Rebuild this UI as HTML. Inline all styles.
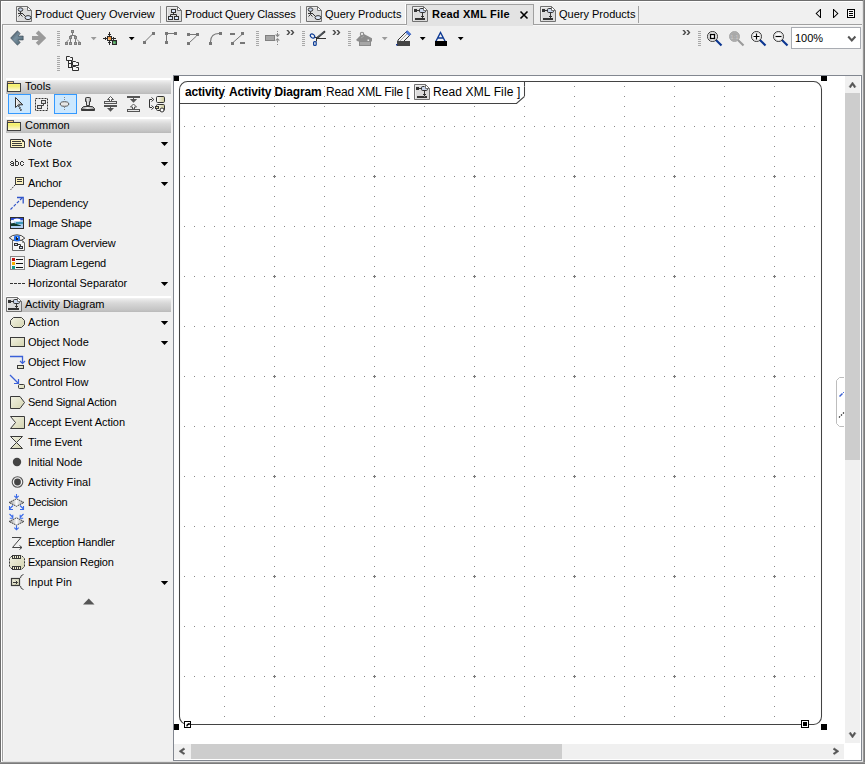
<!DOCTYPE html><html><head><meta charset='utf-8'><style>
*{margin:0;padding:0;box-sizing:border-box}
html,body{width:865px;height:764px;overflow:hidden;background:#f0f0f0;font-family:"Liberation Sans",sans-serif;font-size:11px;color:#000}
.a{position:absolute}
.t{position:absolute;white-space:nowrap;line-height:13px}
svg{position:absolute;overflow:visible}
</style></head><body><div class='a' style='left:0;top:0;width:865px;height:1px;background:#6d6d6d'></div><div class='a' style='left:0;top:0;width:1px;height:764px;background:#6d6d6d'></div><div class='a' style='left:1px;top:1px;width:862px;height:1px;background:#fff'></div><div class='a' style='left:1px;top:1px;width:1px;height:761px;background:#fff'></div><div class='a' style='left:863px;top:0;width:2px;height:764px;background:linear-gradient(90deg,#a5a5a5,#6d6d6d)'></div><div class='a' style='left:0;top:762px;width:865px;height:2px;background:linear-gradient(180deg,#a5a5a5,#6d6d6d)'></div><div class='a' style='left:862px;top:1px;width:1px;height:761px;background:#e3e3e3'></div><div class='a' style='left:2px;top:761px;width:861px;height:1px;background:#e3e3e3'></div><div class='a' style='left:2px;top:24px;width:404px;height:1px;background:#a0a0a0'></div><div class='a' style='left:534px;top:24px;width:328px;height:1px;background:#a0a0a0'></div><div class='a' style='left:2px;top:24px;width:1px;height:737px;background:#a0a0a0'></div><div class='a' style='left:3px;top:25px;width:1px;height:736px;background:#f8f8f8'></div><div class='a' style='left:3px;top:25px;width:859px;height:1px;background:#f8f8f8'></div><div class='a' style='left:405px;top:4px;width:1px;height:20px;background:#fff'></div><div class='a' style='left:406px;top:4px;width:128px;height:21px;border:1px solid #a0a0a0;border-bottom:none;background:#e3e3e3'></div><div class='a' style='left:407px;top:25px;width:126px;height:1px;background:#e3e3e3'></div><svg class='a' style='left:16px;top:6px' width='16' height='16' viewBox='0 0 16 16' ><path d='M0.5 0.5H11.5L15.5 4.5V15.5H0.5Z' fill='#dcdcdc' stroke='#727272'/><path d='M1.5 14.5V1.5H11' fill='none' stroke='#eeeeee'/><ellipse cx='4.5' cy='3.6' rx='2.3' ry='1.8' fill='#c9d6ec' stroke='#333' stroke-width='1'/><path d='M2 7.5H7M4.5 5.5V8.5M4.5 8.5L2.5 10.5M4.5 8.5L6.5 10.5M6.5 7.5L9.5 10.5' stroke='#333' fill='none'/><ellipse cx='12' cy='11.6' rx='3' ry='2' fill='#dde6f6' stroke='#333'/><path d='M11.5 0.5V4.5H15.5L11.5 0.5Z' fill='#fff' stroke='#727272' stroke-linejoin='round'/></svg><div class='t' style='left:35px;top:8px;letter-spacing:0px'>Product Query Overview</div><div class='a' style='left:160px;top:6px;width:1px;height:17px;background:#a0a0a0'></div><svg class='a' style='left:166px;top:6px' width='16' height='16' viewBox='0 0 16 16' ><path d='M0.5 0.5H11.5L15.5 4.5V15.5H0.5Z' fill='#dcdcdc' stroke='#727272'/><path d='M1.5 14.5V1.5H11' fill='none' stroke='#eeeeee'/><rect x='5.5' y='3.5' width='4' height='3' fill='#d9e6fb' stroke='#333'/><path d='M7.5 6.5V8.5M4.5 10V8.5H10.5V10' stroke='#333' fill='none'/><rect x='2.5' y='10.5' width='4' height='3' fill='#d9e6fb' stroke='#333'/><rect x='8.5' y='10.5' width='4' height='3' fill='#d9e6fb' stroke='#333'/><path d='M11.5 0.5V4.5H15.5L11.5 0.5Z' fill='#fff' stroke='#727272' stroke-linejoin='round'/></svg><div class='t' style='left:185px;top:8px;letter-spacing:-0.12px'>Product Query Classes</div><div class='a' style='left:300px;top:6px;width:1px;height:17px;background:#a0a0a0'></div><svg class='a' style='left:306px;top:6px' width='16' height='16' viewBox='0 0 16 16' ><path d='M0.5 0.5H11.5L15.5 4.5V15.5H0.5Z' fill='#dcdcdc' stroke='#727272'/><path d='M1.5 14.5V1.5H11' fill='none' stroke='#eeeeee'/><ellipse cx='4.5' cy='3.6' rx='2.3' ry='1.8' fill='#c9d6ec' stroke='#333' stroke-width='1'/><path d='M2 7.5H7M4.5 5.5V8.5M4.5 8.5L2.5 10.5M4.5 8.5L6.5 10.5M6.5 7.5L9.5 10.5' stroke='#333' fill='none'/><ellipse cx='12' cy='11.6' rx='3' ry='2' fill='#dde6f6' stroke='#333'/><path d='M11.5 0.5V4.5H15.5L11.5 0.5Z' fill='#fff' stroke='#727272' stroke-linejoin='round'/></svg><div class='t' style='left:325px;top:8px;letter-spacing:0px'>Query Products</div><svg class='a' style='left:412px;top:6px' width='16' height='16' viewBox='0 0 16 16' ><path d='M0.5 0.5H11.5L15.5 4.5V15.5H0.5Z' fill='#dcdcdc' stroke='#727272'/><path d='M1.5 14.5V1.5H11' fill='none' stroke='#eeeeee'/><rect x='2' y='3' width='3' height='3' fill='#333'/><path d='M5 4.5H7.5M10.5 7V12M9 10.5H12' stroke='#333' fill='none'/><rect x='7.5' y='2.5' width='6' height='4' rx='1.2' fill='#cbd8ee' stroke='#333'/><rect x='3' y='12' width='10' height='2' fill='#333'/><path d='M11.5 0.5V4.5H15.5L11.5 0.5Z' fill='#fff' stroke='#727272' stroke-linejoin='round'/></svg><div class='t' style='left:432px;top:8px;font-weight:bold;letter-spacing:0.22px'>Read XML File</div><svg class='a' style='left:520px;top:11px' width='9' height='8' viewBox='0 0 9 8' ><path d='M0.5 0.5L7.5 7.5M7.5 0.5L0.5 7.5' stroke='#000' stroke-width='1.6'/></svg><svg class='a' style='left:540px;top:6px' width='16' height='16' viewBox='0 0 16 16' ><path d='M0.5 0.5H11.5L15.5 4.5V15.5H0.5Z' fill='#dcdcdc' stroke='#727272'/><path d='M1.5 14.5V1.5H11' fill='none' stroke='#eeeeee'/><rect x='2' y='3' width='3' height='3' fill='#333'/><path d='M5 4.5H7.5M10.5 7V12M9 10.5H12' stroke='#333' fill='none'/><rect x='7.5' y='2.5' width='6' height='4' rx='1.2' fill='#cbd8ee' stroke='#333'/><rect x='3' y='12' width='10' height='2' fill='#333'/><path d='M11.5 0.5V4.5H15.5L11.5 0.5Z' fill='#fff' stroke='#727272' stroke-linejoin='round'/></svg><div class='t' style='left:559px;top:8px;letter-spacing:0px'>Query Products</div><div class='a' style='left:638px;top:6px;width:1px;height:17px;background:#a0a0a0'></div><svg class='a' style='left:0px;top:0px' width='865' height='30' viewBox='0 0 865 30' ><g fill='#000'><rect x='820' y='9' width='1' height='9'/><rect x='833' y='9' width='1' height='9'/><path d='M820 9.2V10.6L816.9 13.5L820 16.4V17.8L815.5 13.5Z'/><path d='M834 9.2V10.6L837.1 13.5L834 16.4V17.8L838.5 13.5Z'/></g><rect x='847.5' y='9.5' width='7' height='8' fill='#fafafa' stroke='#000'/><path d='M849 11.5H853M849 13.5H853M849 15.5H853' stroke='#000'/></svg><svg class='a' style='left:0px;top:0px' width='50' height='50' viewBox='0 0 50 50' ><defs><linearGradient id='ga' x1='0' y1='0' x2='1' y2='1'><stop offset='0' stop-color='#34424c'/><stop offset='.45' stop-color='#7890a0'/><stop offset='1' stop-color='#48606a'/></linearGradient></defs><path d='M10.6 38L17.4 30.8L20.3 33.5L17.9 36H23.2V40H17.9L20.3 42.5L17.4 45.2Z' fill='url(#ga)' stroke='#2a3540' stroke-width='.5'/><path d='M46.2 38L38.6 30.4L35.8 33.2L38.6 36H32V40H38.6L35.8 42.8L38.6 45.6Z' fill='#9a9a9a'/></svg><svg class='a' style='left:57px;top:31px' width='3' height='16' viewBox='0 0 3 16' ><path d='M0 0.5H3M0 2.5H3M0 4.5H3M0 6.5H3M0 8.5H3M0 10.5H3M0 12.5H3M0 14.5H3' stroke='#a8a8a8'/></svg><svg class='a' style='left:0px;top:0px' width='100' height='50' viewBox='0 0 100 50' ><g fill='#a4a4a4' stroke='#7e7e7e'><rect x='71.5' y='30.5' width='2' height='2'/><rect x='69.5' y='36.5' width='2' height='2'/><rect x='74.5' y='36.5' width='2' height='2'/><rect x='65.5' y='42.5' width='2' height='2'/><rect x='69.5' y='42.5' width='2' height='2'/><rect x='74.5' y='42.5' width='2' height='2'/><rect x='78.5' y='42.5' width='2' height='2'/></g><path d='M72.5 33V35.5M70.5 36V35.5H75.5V36M70.5 39V42M75.5 39V42M69 39.5L66.5 42M77 39.5L79.5 42' stroke='#7e7e7e' fill='none'/></svg><svg class='a' style='left:91px;top:37px' width='6' height='4' viewBox='0 0 6 4' ><path d='M-0.2 0H5.6L2.7 3.3Z' fill='#9a9a9a'/></svg><svg class='a' style='left:0px;top:0px' width='200' height='50' viewBox='0 0 200 50' ><path d='M109.5 32V45M103 38.5H116M108 34.5H111M108 42.5H111M105.5 37V40M113.5 37V40' stroke='#2a2a2a' fill='none'/><defs><linearGradient id='go' x1='0' y1='1' x2='1' y2='0'><stop offset='0' stop-color='#fffbe8'/><stop offset='.5' stop-color='#f0a050'/><stop offset='1' stop-color='#e07818'/></linearGradient><linearGradient id='gg' x1='0' y1='1' x2='1' y2='0'><stop offset='0' stop-color='#fffbe8'/><stop offset='.5' stop-color='#60c070'/><stop offset='1' stop-color='#20a040'/></linearGradient></defs><rect x='107.5' y='36.5' width='4' height='4' fill='url(#go)' stroke='#2a2a2a'/><rect x='112.6' y='40.6' width='3.8' height='3.8' fill='url(#gg)' stroke='#2a2a2a' stroke-width='1.2'/></svg><svg class='a' style='left:129px;top:37px' width='6' height='4' viewBox='0 0 6 4' ><path d='M-0.2 0H5.6L2.7 3.3Z' fill='#000'/></svg><svg class='a' style='left:142px;top:31px' width='14' height='14' viewBox='0 0 14 14' ><rect x='1' y='10' width='3' height='3' fill='#777'/><rect x='10' y='1' width='3' height='3' fill='#777'/><path d='M3 10.5L10.5 3' stroke='#777'/></svg><svg class='a' style='left:0px;top:0px' width='250' height='50' viewBox='0 0 250 50' ><g fill='#777'><rect x='165' y='32' width='3' height='3'/><rect x='174' y='32' width='3' height='3'/><rect x='165' y='41' width='3' height='3'/><rect x='187' y='33' width='3' height='3'/><rect x='196' y='33' width='3' height='3'/><rect x='187' y='42' width='3' height='3'/></g><path d='M168 33.5H174M166.5 35V41M190 34.5H196M196.5 36L189.5 42.5' stroke='#777' fill='none'/></svg><svg class='a' style='left:208px;top:31px' width='15' height='15' viewBox='0 0 15 15' ><rect x='1' y='11' width='3' height='3' fill='#777'/><rect x='11' y='1' width='3' height='3' fill='#777'/><path d='M2.5 11C2.5 5 6 2.5 11 2.5' stroke='#777' fill='none' stroke-width='1.1'/></svg><svg class='a' style='left:229px;top:31px' width='16' height='15' viewBox='0 0 16 15' ><rect x='1' y='2' width='5' height='2' fill='#777'/><rect x='12' y='1' width='3' height='3' fill='#777'/><rect x='2' y='11' width='3' height='3' fill='#777'/><rect x='11' y='11' width='5' height='2' fill='#777'/><path d='M13 3.5L4 11.5' stroke='#777'/></svg><svg class='a' style='left:256px;top:31px' width='3' height='16' viewBox='0 0 3 16' ><path d='M0 0.5H3M0 2.5H3M0 4.5H3M0 6.5H3M0 8.5H3M0 10.5H3M0 12.5H3M0 14.5H3' stroke='#a8a8a8'/></svg><svg class='a' style='left:0px;top:0px' width='300' height='50' viewBox='0 0 300 50' ><rect x='265.5' y='35.5' width='9' height='5' fill='#a6a6a6' stroke='#808080'/><g fill='#888'><rect x='277' y='31' width='1' height='1'/><rect x='277' y='44' width='1' height='1'/><rect x='277' y='33' width='1' height='2'/><path d='M275 34.6H280L277.5 37.2Z'/><path d='M275 40.6H280L277.5 38Z'/><rect x='277' y='40.5' width='1' height='2'/></g></svg><svg class='a' style='left:286px;top:30px' width='9' height='6' viewBox='0 0 9 6' ><path d='M0.3 0H2.2L4.4 2.5L2.2 5H0.3L2.5 2.5ZM4.3 0H6.2L8.4 2.5L6.2 5H4.3L6.5 2.5Z' fill='#4a4a4a'/></svg><svg class='a' style='left:302px;top:31px' width='3' height='16' viewBox='0 0 3 16' ><path d='M0 0.5H3M0 2.5H3M0 4.5H3M0 6.5H3M0 8.5H3M0 10.5H3M0 12.5H3M0 14.5H3' stroke='#a8a8a8'/></svg><svg class='a' style='left:0px;top:0px' width='400' height='50' viewBox='0 0 400 50' ><path d='M316.5 38V41.5M314.5 37.5H317M316 38.5H326' stroke='#333' fill='none'/><path d='M316.8 38.2L325 31.2' stroke='#333' stroke-width='2'/><path d='M317.8 37.2L324 31.8' stroke='#a8c8e8' stroke-width='.7' stroke-dasharray='.8 .8'/><ellipse cx='312.5' cy='36' rx='2.4' ry='1.8' transform='rotate(40 312.5 36)' fill='none' stroke='#0c3c96' stroke-width='1.2'/><rect x='313.6' y='41.6' width='2.6' height='3.8' rx='1' fill='none' stroke='#0c3c96' stroke-width='1.2'/></svg><svg class='a' style='left:332px;top:30px' width='9' height='6' viewBox='0 0 9 6' ><path d='M0.3 0H2.2L4.4 2.5L2.2 5H0.3L2.5 2.5ZM4.3 0H6.2L8.4 2.5L6.2 5H4.3L6.5 2.5Z' fill='#4a4a4a'/></svg><svg class='a' style='left:348px;top:31px' width='3' height='16' viewBox='0 0 3 16' ><path d='M0 0.5H3M0 2.5H3M0 4.5H3M0 6.5H3M0 8.5H3M0 10.5H3M0 12.5H3M0 14.5H3' stroke='#a8a8a8'/></svg><svg class='a' style='left:0px;top:0px' width='400' height='50' viewBox='0 0 400 50' ><path d='M356 40L362.5 33.2L372 38.2V41.5H358Z' fill='#8c8c8c'/><circle cx='362' cy='34' r='1.7' fill='#e8e8e8' stroke='#8c8c8c' stroke-width='1.1'/><rect x='367.5' y='39.5' width='1.6' height='1.6' fill='#eee'/><path d='M361 38L364 36' stroke='#a4a4a4'/><rect x='359.5' y='41.5' width='11' height='4' fill='#a6a6a6' stroke='#8a8a8a'/></svg><svg class='a' style='left:382px;top:37px' width='6' height='4' viewBox='0 0 6 4' ><path d='M-0.2 0H5.6L2.7 3.3Z' fill='#9a9a9a'/></svg><svg class='a' style='left:0px;top:0px' width='450' height='50' viewBox='0 0 450 50' ><g transform='translate(-0.5 1)'><path d='M398.5 41V39L407 30.5L410.5 34L403.5 41' fill='#f2f2f2' stroke='#333' stroke-linejoin='round'/><path d='M400.5 40L408 32.5' stroke='#aaa'/><path d='M406.3 31.2L407.8 29.7L411.3 33.2L409.8 34.7Z' fill='#4a7ae0' stroke='#2a4fb0' stroke-width='.8'/></g><rect x='397' y='41' width='13' height='5' fill='#444'/><rect x='396' y='44' width='1.5' height='1.5' fill='#1a3a9a'/></svg><svg class='a' style='left:420px;top:37px' width='6' height='4' viewBox='0 0 6 4' ><path d='M-0.2 0H5.6L2.7 3.3Z' fill='#000'/></svg><svg class='a' style='left:434px;top:31px' width='14' height='16' viewBox='0 0 14 16' ><path d='M1.8 10.5L6.5 1.5L11.2 10.5M4 7H9' stroke='#0e3a94' stroke-width='1.4' fill='none'/><rect x='1' y='10' width='12' height='5' fill='#000'/></svg><svg class='a' style='left:458px;top:37px' width='6' height='4' viewBox='0 0 6 4' ><path d='M-0.2 0H5.6L2.7 3.3Z' fill='#000'/></svg><svg class='a' style='left:682px;top:30px' width='9' height='6' viewBox='0 0 9 6' ><path d='M0.3 0H2.2L4.4 2.5L2.2 5H0.3L2.5 2.5ZM4.3 0H6.2L8.4 2.5L6.2 5H4.3L6.5 2.5Z' fill='#4a4a4a'/></svg><svg class='a' style='left:698px;top:31px' width='3' height='16' viewBox='0 0 3 16' ><path d='M0 0.5H3M0 2.5H3M0 4.5H3M0 6.5H3M0 8.5H3M0 10.5H3M0 12.5H3M0 14.5H3' stroke='#a8a8a8'/></svg><svg class='a' style='left:0px;top:0px' width='865' height='60' viewBox='0 0 865 60' ><path d='M715.7 39.7L721.5 45.5' stroke='#0a3590' stroke-width='2.1'/><circle cx='712.5' cy='36.5' r='5' fill='#fff' stroke='#333' stroke-width='1'/><circle cx='712.5' cy='36.5' r='4' fill='none' stroke='#c4c4c4' stroke-width='.7'/><rect x='710.5' y='34.5' width='4' height='4' fill='none' stroke='#000' stroke-width='1.3'/></svg><svg class='a' style='left:0px;top:0px' width='865' height='60' viewBox='0 0 865 60' ><path d='M737.7 39.7L743.5 45.5' stroke='#9a9a9a' stroke-width='2.1'/><circle cx='734.5' cy='36.5' r='5' fill='#a8a8a8' stroke='#a8a8a8' stroke-width='1'/><circle cx='734.5' cy='36.5' r='4' fill='none' stroke='#b0b0b0' stroke-width='.7'/><text x='734.5' y='39' font-size='6' text-anchor='middle' fill='#c8c8c8' font-family='Liberation Sans'>1:1</text></svg><svg class='a' style='left:0px;top:0px' width='865' height='60' viewBox='0 0 865 60' ><path d='M759.7 39.7L765.5 45.5' stroke='#0a3590' stroke-width='2.1'/><circle cx='756.5' cy='36.5' r='5' fill='#fff' stroke='#333' stroke-width='1'/><circle cx='756.5' cy='36.5' r='4' fill='none' stroke='#c4c4c4' stroke-width='.7'/><path d='M753.5 36.5H759.5M756.5 33.5V39.5' stroke='#000' stroke-width='1.2'/></svg><svg class='a' style='left:0px;top:0px' width='865' height='60' viewBox='0 0 865 60' ><path d='M781.7 39.7L787.5 45.5' stroke='#0a3590' stroke-width='2.1'/><circle cx='778.5' cy='36.5' r='5' fill='#fff' stroke='#333' stroke-width='1'/><circle cx='778.5' cy='36.5' r='4' fill='none' stroke='#c4c4c4' stroke-width='.7'/><path d='M775.5 36.5H781.5' stroke='#000' stroke-width='1.2'/></svg><div class='a' style='left:791px;top:27px;width:70px;height:22px;border:1px solid #a9acb2;background:#fff'></div><div class='t' style='left:795px;top:32px;font-size:11px'>100%</div><svg class='a' style='left:847px;top:35px' width='10' height='8' viewBox='0 0 10 8' ><path d='M1.2 1.5L4.8 5.5L8.4 1.5' stroke='#555' stroke-width='2' fill='none'/></svg><svg class='a' style='left:57px;top:56px' width='3' height='16' viewBox='0 0 3 16' ><path d='M0 0.5H3M0 2.5H3M0 4.5H3M0 6.5H3M0 8.5H3M0 10.5H3M0 12.5H3M0 14.5H3' stroke='#a8a8a8'/></svg><svg class='a' style='left:0px;top:0px' width='100' height='80' viewBox='0 0 100 80' ><g fill='#f6f6f6' stroke='#2e2e2e'><rect x='68.5' y='60.5' width='3' height='7'/><path d='M68.5 63.5H71.5' fill='none'/><path d='M66.5 56.5H69.5L70.5 57.5H72.5V60.5H66.5Z'/><path d='M72.5 61.5H75.5L76.5 62.5H78.5V65.5H72.5Z'/><path d='M72.5 66.5H75.5L76.5 67.5H78.5V70.5H72.5Z'/></g></svg><svg width='0' height='0' style='position:absolute'><defs><linearGradient id='gf' x1='0' y1='0' x2='0' y2='1'><stop offset='0' stop-color='#fdfa78'/><stop offset='.3' stop-color='#f2ee70'/><stop offset='1' stop-color='#fffce8'/></linearGradient><linearGradient id='gc' x1='0' y1='0' x2='1' y2='1'><stop offset='0' stop-color='#f2f2e4'/><stop offset='1' stop-color='#d4d4b0'/></linearGradient><linearGradient id='gs' x1='0' y1='0' x2='0' y2='1'><stop offset='0' stop-color='#777'/><stop offset='.5' stop-color='#fff'/><stop offset='1' stop-color='#555'/></linearGradient></defs></svg><div class='a' style='left:6px;top:78px;width:165px;height:16px;background:linear-gradient(#fff 0,#fff 1.5px,#f2f2f2 2px,#e6e6e6 4px,#d8d8d8 7px,#c4c4c4 14px,#b9b9b9 16px)'></div><svg class='a' style='left:7px;top:81px' width='15' height='12' viewBox='0 0 15 12' ><rect x='0.5' y='0.5' width='6' height='2.2' fill='#f8c880' stroke='#5a5a5a'/><rect x='0.5' y='2.5' width='13' height='8' fill='url(#gf)' stroke='#404040'/></svg><div class='t' style='left:25px;top:80px'>Tools</div><div class='a' style='left:6px;top:117px;width:165px;height:16px;background:linear-gradient(#fff 0,#fff 1.5px,#f2f2f2 2px,#e6e6e6 4px,#d8d8d8 7px,#c4c4c4 14px,#b9b9b9 16px)'></div><svg class='a' style='left:7px;top:120px' width='15' height='12' viewBox='0 0 15 12' ><rect x='0.5' y='0.5' width='6' height='2.2' fill='#f8c880' stroke='#5a5a5a'/><rect x='0.5' y='2.5' width='13' height='8' fill='url(#gf)' stroke='#404040'/></svg><div class='t' style='left:25px;top:119px'>Common</div><div class='a' style='left:6px;top:296px;width:165px;height:16px;background:linear-gradient(#fff 0,#fff 1.5px,#f2f2f2 2px,#e6e6e6 4px,#d8d8d8 7px,#c4c4c4 14px,#b9b9b9 16px)'></div><svg class='a' style='left:6px;top:297px' width='16' height='15' viewBox='0 0 16 15' ><path d='M0.5 0.5H11.5L15.5 4.5V14.5H0.5Z' fill='#dcdcdc' stroke='#727272'/><path d='M1.5 13.5V1.5H11' fill='none' stroke='#eeeeee'/><rect x='2' y='3' width='3' height='3' fill='#333'/><path d='M5 4.5H7.5M10.5 7V11M9 9.5H12' stroke='#333' fill='none'/><rect x='7.5' y='2.5' width='6' height='4' rx='1.2' fill='#cbd8ee' stroke='#333'/><rect x='2' y='11' width='11' height='2' fill='#333'/><path d='M11.5 0.5V4.5H15.5L11.5 0.5Z' fill='#fff' stroke='#727272' stroke-linejoin='round'/></svg><div class='t' style='left:25px;top:298px'>Activity Diagram</div><div class='a' style='left:8px;top:94px;width:23px;height:20px;border:1px solid #3399ff;background:#cce8ff'></div><div class='a' style='left:54px;top:94px;width:23px;height:20px;border:1px solid #3399ff;background:#cce8ff'></div><svg class='a' style='left:0px;top:0px' width='100' height='120' viewBox='0 0 100 120' ><defs><linearGradient id='gar' x1='0' y1='0' x2='1' y2='0'><stop offset='0' stop-color='#fff'/><stop offset='1' stop-color='#999'/></linearGradient></defs><path d='M15.5 97.5V107.5L18.5 104.8H22.8Z' fill='url(#gar)' stroke='#333' stroke-linejoin='round'/><path d='M18.6 105.5L21.3 110.8' stroke='#333' stroke-width='1.8' stroke-dasharray='1.3 .9'/><rect x='35.5' y='98.5' width='12' height='12' fill='none' stroke='#333' stroke-dasharray='2 1'/><rect x='41.5' y='100.5' width='4' height='3' fill='#ddd' stroke='#444'/><rect x='37.5' y='105.5' width='4' height='3' fill='#ddd' stroke='#444'/><path d='M43.5 103.5V105.5H41.5' stroke='#444' fill='none'/><path d='M64.5 97V101M64.5 107V110' stroke='#888' stroke-dasharray='1 1'/><ellipse cx='64.5' cy='104' rx='4.3' ry='2.3' fill='#e6e6e6' stroke='#555'/></svg><svg class='a' style='left:0px;top:0px' width='200' height='120' viewBox='0 0 200 120' ><defs><linearGradient id='gst' x1='0' y1='0' x2='1' y2='0'><stop offset='0' stop-color='#777'/><stop offset='.45' stop-color='#eee'/><stop offset='1' stop-color='#888'/></linearGradient><linearGradient id='gcr' x1='0' y1='0' x2='1' y2='0'><stop offset='0' stop-color='#fff'/><stop offset='1' stop-color='#cfcb98'/></linearGradient></defs><path d='M85.5 101.5V98.5Q85.5 97.5 86.5 97.5H89.5Q90.5 97.5 90.5 98.5V101.5H89.5V105.5H86.5V101.5Z' fill='url(#gst)' stroke='#3a3a3a'/><path d='M81.5 110.5V108.5L83.5 106.5H92.5L94.5 108.5V110.5Z' fill='url(#gst)' stroke='#3a3a3a'/><rect x='82' y='109' width='12' height='2' fill='#3a3a3a'/><path d='M110.5 96.5L113.5 99.5H111.5V101.5H109.5V99.5H107.5Z' fill='#fafafa' stroke='#555' stroke-linejoin='miter'/><rect x='104.5' y='101.5' width='12' height='2' fill='#e8e8e8' stroke='#555'/><rect x='104' y='105' width='13' height='2' fill='#555'/><path d='M107 108H114L110.5 111.8Z' fill='#555'/><rect x='110' y='107' width='1' height='1' fill='#555'/><rect x='127' y='96' width='13' height='2' fill='#555'/><path d='M129.8 99H137.2L133.5 102.8Z' fill='#555'/><rect x='133' y='98' width='1' height='1' fill='#555'/><path d='M133.5 104L136.5 107H134.5V109H132.5V107H130.5Z' fill='#fafafa' stroke='#555'/><rect x='127.5' y='109.5' width='12' height='2' fill='#e8e8e8' stroke='#555'/><path d='M152 99.5H149.5V107.5H152' fill='none' stroke='#333'/><path d='M151.5 97.5L153.8 99.5L151.5 101.5M151.5 105.5L153.8 107.5L151.5 109.5' fill='none' stroke='#333'/><rect x='156.5' y='96.5' width='8' height='6' rx='1.2' fill='url(#gcr)' stroke='#333'/><rect x='156.5' y='104.5' width='8' height='6' rx='1.2' fill='url(#gcr)' stroke='#333'/><rect x='155.5' y='106.5' width='3' height='2' fill='#dcd8a0' stroke='#333'/><circle cx='162' cy='110' r='2' fill='#fff' stroke='#333'/></svg><svg class='a' style='left:10px;top:139px' width='16' height='10' viewBox='0 0 16 10' ><path d='M0.5 0.5H12.5L14.5 2.5V8.5H0.5Z' fill='#fdf3bf' stroke='#3a3a3a'/><path d='M2 2.5H11M2 4.5H12M2 6.5H12' stroke='#3a3a3a'/><path d='M12.5 0.5V2.5H14.5' stroke='#3a3a3a' fill='none'/></svg><div class='t' style='left:28px;top:137px;letter-spacing:0.333px'>Note</div><svg class='a' style='left:161px;top:142px' width='8' height='5' viewBox='0 0 8 5' ><path d='M-0.2 0H7.2L3.5 3.9Z' fill='#000'/></svg><svg class='a' style='left:0px;top:0px' width='30' height='170' viewBox='0 0 30 170' ><g fill='#383838'><rect x='11' y='161' width='2' height='1'/><rect x='10' y='162' width='1' height='1'/><rect x='13' y='162' width='1' height='4'/><rect x='11' y='163' width='2' height='1'/><rect x='10' y='164' width='1' height='1'/><rect x='11' y='165' width='2' height='1'/><rect x='15' y='159' width='1' height='7'/><rect x='16' y='161' width='2' height='1'/><rect x='18' y='162' width='1' height='3'/><rect x='16' y='165' width='2' height='1'/><rect x='21' y='161' width='2' height='1'/><rect x='20' y='162' width='1' height='3'/><rect x='23' y='162' width='1' height='1'/><rect x='23' y='164' width='1' height='1'/><rect x='21' y='165' width='2' height='1'/></g></svg><div class='t' style='left:28px;top:157px;letter-spacing:0.214px'>Text Box</div><svg class='a' style='left:161px;top:162px' width='8' height='5' viewBox='0 0 8 5' ><path d='M-0.2 0H7.2L3.5 3.9Z' fill='#000'/></svg><svg class='a' style='left:9px;top:176px' width='16' height='16' viewBox='0 0 16 16' ><rect x='6.5' y='1.5' width='8' height='7' fill='#fdf3bf' stroke='#3a3a3a'/><path d='M8 3.5H13M8 5.5H13' stroke='#3a3a3a'/><path d='M6 9L1 14.5' stroke='#3a3a3a' stroke-dasharray='1.5 1'/></svg><div class='t' style='left:28px;top:177px;letter-spacing:-0.200px'>Anchor</div><svg class='a' style='left:161px;top:182px' width='8' height='5' viewBox='0 0 8 5' ><path d='M-0.2 0H7.2L3.5 3.9Z' fill='#000'/></svg><svg class='a' style='left:9px;top:196px' width='16' height='16' viewBox='0 0 16 16' ><path d='M1.5 13.5L13 2' stroke='#3054c8' stroke-width='1.2' stroke-dasharray='3 1.5'/><path d='M8 1.5H14.2V7.5' stroke='#3054c8' stroke-width='1.3' fill='none'/></svg><div class='t' style='left:28px;top:197px;letter-spacing:-0.167px'>Dependency</div><svg class='a' style='left:0px;top:0px' width='30' height='240' viewBox='0 0 30 240' ><rect x='10.5' y='217.5' width='13' height='11' fill='#a8c8ec' stroke='#2e2e2e'/><rect x='11' y='218' width='12' height='2' fill='#2848d0'/><ellipse cx='17' cy='220' rx='3.5' ry='1.6' fill='#fff'/><ellipse cx='12.5' cy='221.5' rx='1.8' ry='1.5' fill='#f4f8ff'/><rect x='16' y='222' width='7' height='2' fill='#3c98b8'/><path d='M11 223.5L14 223L18 224.5L21 225.5V226H11Z' fill='#0e3a2c'/><rect x='11' y='226' width='12' height='2' fill='#b0d0f4'/></svg><div class='t' style='left:28px;top:217px;letter-spacing:-0.150px'>Image Shape</div><svg class='a' style='left:0px;top:0px' width='30' height='260' viewBox='0 0 30 260' ><path d='M12.5 240.5H22.5L24.5 242.5V250.5H12.5Z' fill='#f6f6f6' stroke='#666'/><path d='M22.5 240.5V242.5H24.5' fill='none' stroke='#888'/><rect x='14.5' y='243.5' width='3' height='2' fill='#c8d4f0' stroke='#333'/><rect x='19.5' y='246.5' width='3' height='2' fill='#c8d4f0' stroke='#333'/><path d='M18 244.5H20.5V246' fill='none' stroke='#333'/><path d='M9.3 237.8Q12 234.8 17 234.8Q22 234.8 24.8 238.2Q22 240.8 17 240.8Q12 240.8 9.3 237.8Z' fill='#f4f0ec' stroke='#444'/><rect x='14' y='235.6' width='6' height='5.6' rx='1.5' fill='#1f6ef0'/><rect x='16' y='237' width='2' height='3' fill='#222'/><rect x='17' y='236.8' width='1' height='1' fill='#fff'/></svg><div class='t' style='left:28px;top:237px;letter-spacing:-0.187px'>Diagram Overview</div><svg class='a' style='left:10px;top:256px' width='15' height='15' viewBox='0 0 15 15' ><rect x='0.5' y='0.5' width='14' height='13' fill='#f6f6f6' stroke='#888'/><rect x='2' y='2' width='3' height='3' fill='#c01010'/><rect x='2' y='6' width='3' height='3' fill='#f8b000'/><rect x='2' y='10' width='3' height='3' fill='#119988'/><path d='M6 3.5H13M6 7.5H13M6 11.5H13' stroke='#111'/></svg><div class='t' style='left:28px;top:257px;letter-spacing:-0.246px'>Diagram Legend</div><svg class='a' style='left:10px;top:283px' width='16' height='1' viewBox='0 0 16 1' ><path d='M0 0.5H3M4 0.5H7M8 0.5H11M12 0.5H15' stroke='#333'/></svg><div class='t' style='left:28px;top:277px;letter-spacing:-0.089px'>Horizontal Separator</div><svg class='a' style='left:161px;top:282px' width='8' height='5' viewBox='0 0 8 5' ><path d='M-0.2 0H7.2L3.5 3.9Z' fill='#000'/></svg><svg class='a' style='left:0px;top:0px' width='30' height='340' viewBox='0 0 30 340' ><path d='M13.5 317.5H21.5L24.5 320.5V324.5L21.5 327.5H13.5L10.5 324.5V320.5Z' fill='url(#gc)' stroke='#3a3a3a'/></svg><div class='t' style='left:28px;top:316px;letter-spacing:0.140px'>Action</div><svg class='a' style='left:161px;top:321px' width='8' height='5' viewBox='0 0 8 5' ><path d='M-0.2 0H7.2L3.5 3.9Z' fill='#000'/></svg><svg class='a' style='left:10px;top:337px' width='15' height='10' viewBox='0 0 15 10' ><rect x='0.5' y='0.5' width='14' height='9' fill='url(#gc)' stroke='#3a3a3a'/></svg><div class='t' style='left:28px;top:336px;letter-spacing:-0.040px'>Object Node</div><svg class='a' style='left:161px;top:341px' width='8' height='5' viewBox='0 0 8 5' ><path d='M-0.2 0H7.2L3.5 3.9Z' fill='#000'/></svg><svg class='a' style='left:9px;top:354px' width='16' height='16' viewBox='0 0 16 16' ><path d='M1 2.5H13.5V9' stroke='#3a60d8' stroke-width='1.3' fill='none'/><path d='M11 7L13.5 9.5L16 7' stroke='#3a60d8' stroke-width='1.2' fill='none'/><rect x='8.5' y='11.5' width='6' height='3' fill='url(#gc)' stroke='#3a3a3a'/></svg><div class='t' style='left:28px;top:356px;letter-spacing:-0.050px'>Object Flow</div><svg class='a' style='left:9px;top:374px' width='17' height='16' viewBox='0 0 17 16' ><path d='M1 1L9 9' stroke='#3a60d8' stroke-width='1.3'/><path d='M9.5 5V9.5H5' stroke='#3a60d8' stroke-width='1.2' fill='none'/><path d='M5 9.5H10' stroke='#3a60d8'/><rect x='9.5' y='10.5' width='6' height='4' rx='1' fill='url(#gc)' stroke='#3a3a3a'/></svg><div class='t' style='left:28px;top:376px;letter-spacing:-0.127px'>Control Flow</div><svg class='a' style='left:10px;top:396px' width='16' height='14' viewBox='0 0 16 14' ><path d='M0.5 0.5H10L14.5 6.5L10 12.5H0.5Z' fill='url(#gc)' stroke='#3a3a3a'/></svg><div class='t' style='left:28px;top:396px;letter-spacing:-0.224px'>Send Signal Action</div><svg class='a' style='left:10px;top:416px' width='16' height='14' viewBox='0 0 16 14' ><path d='M0.5 0.5H14.5V12.5H0.5L5.5 6.5Z' fill='url(#gc)' stroke='#3a3a3a'/></svg><div class='t' style='left:28px;top:416px;letter-spacing:-0.044px'>Accept Event Action</div><svg class='a' style='left:10px;top:436px' width='15' height='14' viewBox='0 0 15 14' ><path d='M0.5 0.5H12.5L6.5 6.5L12.5 12.5H0.5L6.5 6.5Z' fill='url(#gc)' stroke='#3a3a3a'/></svg><div class='t' style='left:28px;top:436px;letter-spacing:-0.122px'>Time Event</div><svg class='a' style='left:12px;top:457px' width='10' height='10' viewBox='0 0 10 10' ><circle cx='5' cy='5' r='4.2' fill='#444'/></svg><div class='t' style='left:28px;top:456px;letter-spacing:-0.064px'>Initial Node</div><svg class='a' style='left:11px;top:476px' width='13' height='13' viewBox='0 0 13 13' ><circle cx='6.5' cy='6' r='5.3' fill='#f4f4f4' stroke='#555' stroke-width='1.1'/><circle cx='6.5' cy='6' r='3.4' fill='#444'/></svg><div class='t' style='left:28px;top:476px;letter-spacing:0.077px'>Activity Final</div><svg class='a' style='left:0px;top:0px' width='30' height='540' viewBox='0 0 30 540' ><defs><linearGradient id='gdm' x1='0' y1='0' x2='1' y2='0'><stop offset='0' stop-color='#909090'/><stop offset='.5' stop-color='#fafafa'/><stop offset='1' stop-color='#a0a0a0'/></linearGradient></defs><path d='M9 502.5L16.5 498.8L24 502.5L16.5 506.3Z' fill='url(#gdm)' stroke='#333' stroke-width='.9' stroke-dasharray='1.6 .6'/><path d='M16.5 494V498M14.3 495.8L16.5 498L18.7 495.8' stroke='#3a6ae8' stroke-width='1.1' fill='none'/><path d='M13 505.5L10 508.5M9.5 506V509.5H13M20 505.5L23 508.5M23.5 506V509.5H20' stroke='#3a6ae8' stroke-width='1.1' fill='none'/></svg><div class='t' style='left:28px;top:496px;letter-spacing:-0.357px'>Decision</div><svg class='a' style='left:0px;top:0px' width='30' height='540' viewBox='0 0 30 540' ><path d='M9 521.5L16.5 517.8L24 521.5L16.5 525.2Z' fill='url(#gdm)' stroke='#333' stroke-width='.9' stroke-dasharray='1.6 .6'/><path d='M9.5 514L13 517.5M12.8 514.8V518.3H9.8M23.5 514L20 517.5M20.2 514.8V518.3H23.2' stroke='#3a6ae8' stroke-width='1.1' fill='none'/><path d='M16.5 525.5V530M14.3 527.6L16.5 529.8L18.7 527.6' stroke='#3a6ae8' stroke-width='1.1' fill='none'/></svg><div class='t' style='left:28px;top:516px;letter-spacing:-0.025px'>Merge</div><svg class='a' style='left:11px;top:536px' width='13' height='14' viewBox='0 0 13 14' ><path d='M1 1.5H10L1.5 11.5H11M8.5 9.5L11 11.5L8.5 13.5' stroke='#444' fill='none'/></svg><div class='t' style='left:28px;top:536px;letter-spacing:-0.181px'>Exception Handler</div><svg class='a' style='left:0px;top:0px' width='30' height='600' viewBox='0 0 30 600' ><path d='M12.5 555.5H21.5L24.5 558.5V566.5L21.5 569.5H12.5L9.5 566.5V558.5Z' fill='url(#gc)' stroke='#3a3a3a' stroke-dasharray='2.2 1'/><rect x='12' y='555' width='9' height='4' fill='#3a3a3a'/><rect x='12' y='566' width='9' height='4' fill='#3a3a3a'/><g fill='#f0eed0'><rect x='13' y='556' width='1' height='2'/><rect x='15' y='556' width='1' height='2'/><rect x='17' y='556' width='1' height='2'/><rect x='19' y='556' width='1' height='2'/><rect x='13' y='567' width='1' height='2'/><rect x='15' y='567' width='1' height='2'/><rect x='17' y='567' width='1' height='2'/><rect x='19' y='567' width='1' height='2'/></g></svg><div class='t' style='left:28px;top:556px;letter-spacing:-0.233px'>Expansion Region</div><svg class='a' style='left:0px;top:0px' width='30' height='600' viewBox='0 0 30 600' ><rect x='11.5' y='578.5' width='8' height='7' fill='url(#gc)' stroke='#3a3a3a' stroke-width='1.2'/><path d='M13 582.5H17.5M15.8 580.8L17.5 582.5L15.8 584.2' stroke='#3a3a3a' fill='none'/><path d='M23.5 574.5Q20.5 575 20.5 578M20.5 586Q20.5 589 23.5 589.5' stroke='#444' fill='none'/></svg><div class='t' style='left:28px;top:576px;letter-spacing:0.050px'>Input Pin</div><svg class='a' style='left:161px;top:581px' width='8' height='5' viewBox='0 0 8 5' ><path d='M-0.2 0H7.2L3.5 3.9Z' fill='#000'/></svg><svg class='a' style='left:83px;top:598px' width='12' height='7' viewBox='0 0 12 7' ><path d='M0 6.5H11.5L5.75 0.5Z' fill='#555'/></svg><div class='a' style='left:173px;top:75px;width:689px;height:686px;border:1px solid #828790;background:#fff'></div><div class='a' style='left:845px;top:76px;width:15px;height:667px;background:#f0f0f0'></div><div class='a' style='left:845px;top:93px;width:15px;height:367px;background:#cdcdcd'></div><div class='a' style='left:174px;top:744px;width:670px;height:15px;background:#f0f0f0'></div><div class='a' style='left:191px;top:744px;width:371px;height:15px;background:#cdcdcd'></div><svg class='a' style='left:0px;top:0px' width='865' height='764' viewBox='0 0 865 764' ><g fill='#555' stroke='#555' stroke-width='.45'><path d='M849.2 86.6L852.5 82L855.8 86.6L854.6 88L852.5 85L850.4 88Z'/><path d='M849.2 733.4L852.5 738L855.8 733.4L854.6 732L852.5 735L850.4 732Z'/><path d='M183.6 748L179 751.3L183.6 754.6L185 753.4L182 751.3L185 749.2Z'/><path d='M834.4 748L839 751.3L834.4 754.6L833 753.4L836 751.3L833 749.2Z'/></g></svg><svg class='a' style='left:0;top:0' width='865' height='764'><path d='M179.5 89.5A8 8 0 0 1 187.5 81.5H813.5A8 8 0 0 1 821.5 89.5V716.5A8 8 0 0 1 813.5 724.5H187.5A8 8 0 0 1 179.5 716.5Z' fill='none' stroke='#434343' stroke-width='1.05'/><path d='M179.5 103.5H516.5L524.5 96.5V81.5' fill='none' stroke='#434343' stroke-width='1.05'/></svg><div class='t' style='left:185px;top:85px;font-size:12px;font-weight:bold;line-height:14px;letter-spacing:-0.2px'>activity</div><div class='t' style='left:229px;top:85px;font-size:12px;font-weight:bold;line-height:14px;letter-spacing:-0.13px'>Activity Diagram</div><div class='t' style='left:326px;top:85px;font-size:12px;line-height:14px;letter-spacing:-0.15px'>Read XML File [</div><svg class='a' style='left:414px;top:84px' width='16' height='16' viewBox='0 0 16 16' ><path d='M0.5 0.5H11.5L15.5 4.5V15.5H0.5Z' fill='#dcdcdc' stroke='#727272'/><path d='M1.5 14.5V1.5H11' fill='none' stroke='#eeeeee'/><rect x='2' y='3' width='3' height='3' fill='#333'/><path d='M5 4.5H7.5M10.5 7V12M9 10.5H12' stroke='#333' fill='none'/><rect x='7.5' y='2.5' width='6' height='4' rx='1.2' fill='#cbd8ee' stroke='#333'/><rect x='3' y='12' width='10' height='2' fill='#333'/><path d='M11.5 0.5V4.5H15.5L11.5 0.5Z' fill='#fff' stroke='#727272' stroke-linejoin='round'/></svg><div class='t' style='left:433px;top:85px;font-size:12px;line-height:14px;letter-spacing:0.12px'>Read XML File ]</div><svg class='a' style='left:0;top:0' width='865' height='764' shape-rendering='crispEdges'><path d='M184 126h1v1h-1zM194 126h1v1h-1zM204 126h1v1h-1zM214 126h1v1h-1zM224 126h1v1h-1zM234 126h1v1h-1zM244 126h1v1h-1zM254 126h1v1h-1zM264 126h1v1h-1zM274 126h1v1h-1zM284 126h1v1h-1zM294 126h1v1h-1zM304 126h1v1h-1zM314 126h1v1h-1zM324 126h1v1h-1zM334 126h1v1h-1zM344 126h1v1h-1zM354 126h1v1h-1zM364 126h1v1h-1zM374 126h1v1h-1zM384 126h1v1h-1zM394 126h1v1h-1zM404 126h1v1h-1zM414 126h1v1h-1zM424 126h1v1h-1zM434 126h1v1h-1zM444 126h1v1h-1zM454 126h1v1h-1zM464 126h1v1h-1zM474 126h1v1h-1zM484 126h1v1h-1zM494 126h1v1h-1zM504 126h1v1h-1zM514 126h1v1h-1zM524 126h1v1h-1zM534 126h1v1h-1zM544 126h1v1h-1zM554 126h1v1h-1zM564 126h1v1h-1zM574 126h1v1h-1zM584 126h1v1h-1zM594 126h1v1h-1zM604 126h1v1h-1zM614 126h1v1h-1zM624 126h1v1h-1zM634 126h1v1h-1zM644 126h1v1h-1zM654 126h1v1h-1zM664 126h1v1h-1zM674 126h1v1h-1zM684 126h1v1h-1zM694 126h1v1h-1zM704 126h1v1h-1zM714 126h1v1h-1zM724 126h1v1h-1zM734 126h1v1h-1zM744 126h1v1h-1zM754 126h1v1h-1zM764 126h1v1h-1zM774 126h1v1h-1zM784 126h1v1h-1zM794 126h1v1h-1zM804 126h1v1h-1zM814 126h1v1h-1zM184 176h1v1h-1zM194 176h1v1h-1zM204 176h1v1h-1zM214 176h1v1h-1zM224 176h1v1h-1zM234 176h1v1h-1zM244 176h1v1h-1zM254 176h1v1h-1zM264 176h1v1h-1zM274 176h1v1h-1zM284 176h1v1h-1zM294 176h1v1h-1zM304 176h1v1h-1zM314 176h1v1h-1zM324 176h1v1h-1zM334 176h1v1h-1zM344 176h1v1h-1zM354 176h1v1h-1zM364 176h1v1h-1zM374 176h1v1h-1zM384 176h1v1h-1zM394 176h1v1h-1zM404 176h1v1h-1zM414 176h1v1h-1zM424 176h1v1h-1zM434 176h1v1h-1zM444 176h1v1h-1zM454 176h1v1h-1zM464 176h1v1h-1zM474 176h1v1h-1zM484 176h1v1h-1zM494 176h1v1h-1zM504 176h1v1h-1zM514 176h1v1h-1zM524 176h1v1h-1zM534 176h1v1h-1zM544 176h1v1h-1zM554 176h1v1h-1zM564 176h1v1h-1zM574 176h1v1h-1zM584 176h1v1h-1zM594 176h1v1h-1zM604 176h1v1h-1zM614 176h1v1h-1zM624 176h1v1h-1zM634 176h1v1h-1zM644 176h1v1h-1zM654 176h1v1h-1zM664 176h1v1h-1zM674 176h1v1h-1zM684 176h1v1h-1zM694 176h1v1h-1zM704 176h1v1h-1zM714 176h1v1h-1zM724 176h1v1h-1zM734 176h1v1h-1zM744 176h1v1h-1zM754 176h1v1h-1zM764 176h1v1h-1zM774 176h1v1h-1zM784 176h1v1h-1zM794 176h1v1h-1zM804 176h1v1h-1zM814 176h1v1h-1zM184 226h1v1h-1zM194 226h1v1h-1zM204 226h1v1h-1zM214 226h1v1h-1zM224 226h1v1h-1zM234 226h1v1h-1zM244 226h1v1h-1zM254 226h1v1h-1zM264 226h1v1h-1zM274 226h1v1h-1zM284 226h1v1h-1zM294 226h1v1h-1zM304 226h1v1h-1zM314 226h1v1h-1zM324 226h1v1h-1zM334 226h1v1h-1zM344 226h1v1h-1zM354 226h1v1h-1zM364 226h1v1h-1zM374 226h1v1h-1zM384 226h1v1h-1zM394 226h1v1h-1zM404 226h1v1h-1zM414 226h1v1h-1zM424 226h1v1h-1zM434 226h1v1h-1zM444 226h1v1h-1zM454 226h1v1h-1zM464 226h1v1h-1zM474 226h1v1h-1zM484 226h1v1h-1zM494 226h1v1h-1zM504 226h1v1h-1zM514 226h1v1h-1zM524 226h1v1h-1zM534 226h1v1h-1zM544 226h1v1h-1zM554 226h1v1h-1zM564 226h1v1h-1zM574 226h1v1h-1zM584 226h1v1h-1zM594 226h1v1h-1zM604 226h1v1h-1zM614 226h1v1h-1zM624 226h1v1h-1zM634 226h1v1h-1zM644 226h1v1h-1zM654 226h1v1h-1zM664 226h1v1h-1zM674 226h1v1h-1zM684 226h1v1h-1zM694 226h1v1h-1zM704 226h1v1h-1zM714 226h1v1h-1zM724 226h1v1h-1zM734 226h1v1h-1zM744 226h1v1h-1zM754 226h1v1h-1zM764 226h1v1h-1zM774 226h1v1h-1zM784 226h1v1h-1zM794 226h1v1h-1zM804 226h1v1h-1zM814 226h1v1h-1zM184 276h1v1h-1zM194 276h1v1h-1zM204 276h1v1h-1zM214 276h1v1h-1zM224 276h1v1h-1zM234 276h1v1h-1zM244 276h1v1h-1zM254 276h1v1h-1zM264 276h1v1h-1zM274 276h1v1h-1zM284 276h1v1h-1zM294 276h1v1h-1zM304 276h1v1h-1zM314 276h1v1h-1zM324 276h1v1h-1zM334 276h1v1h-1zM344 276h1v1h-1zM354 276h1v1h-1zM364 276h1v1h-1zM374 276h1v1h-1zM384 276h1v1h-1zM394 276h1v1h-1zM404 276h1v1h-1zM414 276h1v1h-1zM424 276h1v1h-1zM434 276h1v1h-1zM444 276h1v1h-1zM454 276h1v1h-1zM464 276h1v1h-1zM474 276h1v1h-1zM484 276h1v1h-1zM494 276h1v1h-1zM504 276h1v1h-1zM514 276h1v1h-1zM524 276h1v1h-1zM534 276h1v1h-1zM544 276h1v1h-1zM554 276h1v1h-1zM564 276h1v1h-1zM574 276h1v1h-1zM584 276h1v1h-1zM594 276h1v1h-1zM604 276h1v1h-1zM614 276h1v1h-1zM624 276h1v1h-1zM634 276h1v1h-1zM644 276h1v1h-1zM654 276h1v1h-1zM664 276h1v1h-1zM674 276h1v1h-1zM684 276h1v1h-1zM694 276h1v1h-1zM704 276h1v1h-1zM714 276h1v1h-1zM724 276h1v1h-1zM734 276h1v1h-1zM744 276h1v1h-1zM754 276h1v1h-1zM764 276h1v1h-1zM774 276h1v1h-1zM784 276h1v1h-1zM794 276h1v1h-1zM804 276h1v1h-1zM814 276h1v1h-1zM184 326h1v1h-1zM194 326h1v1h-1zM204 326h1v1h-1zM214 326h1v1h-1zM224 326h1v1h-1zM234 326h1v1h-1zM244 326h1v1h-1zM254 326h1v1h-1zM264 326h1v1h-1zM274 326h1v1h-1zM284 326h1v1h-1zM294 326h1v1h-1zM304 326h1v1h-1zM314 326h1v1h-1zM324 326h1v1h-1zM334 326h1v1h-1zM344 326h1v1h-1zM354 326h1v1h-1zM364 326h1v1h-1zM374 326h1v1h-1zM384 326h1v1h-1zM394 326h1v1h-1zM404 326h1v1h-1zM414 326h1v1h-1zM424 326h1v1h-1zM434 326h1v1h-1zM444 326h1v1h-1zM454 326h1v1h-1zM464 326h1v1h-1zM474 326h1v1h-1zM484 326h1v1h-1zM494 326h1v1h-1zM504 326h1v1h-1zM514 326h1v1h-1zM524 326h1v1h-1zM534 326h1v1h-1zM544 326h1v1h-1zM554 326h1v1h-1zM564 326h1v1h-1zM574 326h1v1h-1zM584 326h1v1h-1zM594 326h1v1h-1zM604 326h1v1h-1zM614 326h1v1h-1zM624 326h1v1h-1zM634 326h1v1h-1zM644 326h1v1h-1zM654 326h1v1h-1zM664 326h1v1h-1zM674 326h1v1h-1zM684 326h1v1h-1zM694 326h1v1h-1zM704 326h1v1h-1zM714 326h1v1h-1zM724 326h1v1h-1zM734 326h1v1h-1zM744 326h1v1h-1zM754 326h1v1h-1zM764 326h1v1h-1zM774 326h1v1h-1zM784 326h1v1h-1zM794 326h1v1h-1zM804 326h1v1h-1zM814 326h1v1h-1zM184 376h1v1h-1zM194 376h1v1h-1zM204 376h1v1h-1zM214 376h1v1h-1zM224 376h1v1h-1zM234 376h1v1h-1zM244 376h1v1h-1zM254 376h1v1h-1zM264 376h1v1h-1zM274 376h1v1h-1zM284 376h1v1h-1zM294 376h1v1h-1zM304 376h1v1h-1zM314 376h1v1h-1zM324 376h1v1h-1zM334 376h1v1h-1zM344 376h1v1h-1zM354 376h1v1h-1zM364 376h1v1h-1zM374 376h1v1h-1zM384 376h1v1h-1zM394 376h1v1h-1zM404 376h1v1h-1zM414 376h1v1h-1zM424 376h1v1h-1zM434 376h1v1h-1zM444 376h1v1h-1zM454 376h1v1h-1zM464 376h1v1h-1zM474 376h1v1h-1zM484 376h1v1h-1zM494 376h1v1h-1zM504 376h1v1h-1zM514 376h1v1h-1zM524 376h1v1h-1zM534 376h1v1h-1zM544 376h1v1h-1zM554 376h1v1h-1zM564 376h1v1h-1zM574 376h1v1h-1zM584 376h1v1h-1zM594 376h1v1h-1zM604 376h1v1h-1zM614 376h1v1h-1zM624 376h1v1h-1zM634 376h1v1h-1zM644 376h1v1h-1zM654 376h1v1h-1zM664 376h1v1h-1zM674 376h1v1h-1zM684 376h1v1h-1zM694 376h1v1h-1zM704 376h1v1h-1zM714 376h1v1h-1zM724 376h1v1h-1zM734 376h1v1h-1zM744 376h1v1h-1zM754 376h1v1h-1zM764 376h1v1h-1zM774 376h1v1h-1zM784 376h1v1h-1zM794 376h1v1h-1zM804 376h1v1h-1zM814 376h1v1h-1zM184 426h1v1h-1zM194 426h1v1h-1zM204 426h1v1h-1zM214 426h1v1h-1zM224 426h1v1h-1zM234 426h1v1h-1zM244 426h1v1h-1zM254 426h1v1h-1zM264 426h1v1h-1zM274 426h1v1h-1zM284 426h1v1h-1zM294 426h1v1h-1zM304 426h1v1h-1zM314 426h1v1h-1zM324 426h1v1h-1zM334 426h1v1h-1zM344 426h1v1h-1zM354 426h1v1h-1zM364 426h1v1h-1zM374 426h1v1h-1zM384 426h1v1h-1zM394 426h1v1h-1zM404 426h1v1h-1zM414 426h1v1h-1zM424 426h1v1h-1zM434 426h1v1h-1zM444 426h1v1h-1zM454 426h1v1h-1zM464 426h1v1h-1zM474 426h1v1h-1zM484 426h1v1h-1zM494 426h1v1h-1zM504 426h1v1h-1zM514 426h1v1h-1zM524 426h1v1h-1zM534 426h1v1h-1zM544 426h1v1h-1zM554 426h1v1h-1zM564 426h1v1h-1zM574 426h1v1h-1zM584 426h1v1h-1zM594 426h1v1h-1zM604 426h1v1h-1zM614 426h1v1h-1zM624 426h1v1h-1zM634 426h1v1h-1zM644 426h1v1h-1zM654 426h1v1h-1zM664 426h1v1h-1zM674 426h1v1h-1zM684 426h1v1h-1zM694 426h1v1h-1zM704 426h1v1h-1zM714 426h1v1h-1zM724 426h1v1h-1zM734 426h1v1h-1zM744 426h1v1h-1zM754 426h1v1h-1zM764 426h1v1h-1zM774 426h1v1h-1zM784 426h1v1h-1zM794 426h1v1h-1zM804 426h1v1h-1zM814 426h1v1h-1zM184 476h1v1h-1zM194 476h1v1h-1zM204 476h1v1h-1zM214 476h1v1h-1zM224 476h1v1h-1zM234 476h1v1h-1zM244 476h1v1h-1zM254 476h1v1h-1zM264 476h1v1h-1zM274 476h1v1h-1zM284 476h1v1h-1zM294 476h1v1h-1zM304 476h1v1h-1zM314 476h1v1h-1zM324 476h1v1h-1zM334 476h1v1h-1zM344 476h1v1h-1zM354 476h1v1h-1zM364 476h1v1h-1zM374 476h1v1h-1zM384 476h1v1h-1zM394 476h1v1h-1zM404 476h1v1h-1zM414 476h1v1h-1zM424 476h1v1h-1zM434 476h1v1h-1zM444 476h1v1h-1zM454 476h1v1h-1zM464 476h1v1h-1zM474 476h1v1h-1zM484 476h1v1h-1zM494 476h1v1h-1zM504 476h1v1h-1zM514 476h1v1h-1zM524 476h1v1h-1zM534 476h1v1h-1zM544 476h1v1h-1zM554 476h1v1h-1zM564 476h1v1h-1zM574 476h1v1h-1zM584 476h1v1h-1zM594 476h1v1h-1zM604 476h1v1h-1zM614 476h1v1h-1zM624 476h1v1h-1zM634 476h1v1h-1zM644 476h1v1h-1zM654 476h1v1h-1zM664 476h1v1h-1zM674 476h1v1h-1zM684 476h1v1h-1zM694 476h1v1h-1zM704 476h1v1h-1zM714 476h1v1h-1zM724 476h1v1h-1zM734 476h1v1h-1zM744 476h1v1h-1zM754 476h1v1h-1zM764 476h1v1h-1zM774 476h1v1h-1zM784 476h1v1h-1zM794 476h1v1h-1zM804 476h1v1h-1zM814 476h1v1h-1zM184 526h1v1h-1zM194 526h1v1h-1zM204 526h1v1h-1zM214 526h1v1h-1zM224 526h1v1h-1zM234 526h1v1h-1zM244 526h1v1h-1zM254 526h1v1h-1zM264 526h1v1h-1zM274 526h1v1h-1zM284 526h1v1h-1zM294 526h1v1h-1zM304 526h1v1h-1zM314 526h1v1h-1zM324 526h1v1h-1zM334 526h1v1h-1zM344 526h1v1h-1zM354 526h1v1h-1zM364 526h1v1h-1zM374 526h1v1h-1zM384 526h1v1h-1zM394 526h1v1h-1zM404 526h1v1h-1zM414 526h1v1h-1zM424 526h1v1h-1zM434 526h1v1h-1zM444 526h1v1h-1zM454 526h1v1h-1zM464 526h1v1h-1zM474 526h1v1h-1zM484 526h1v1h-1zM494 526h1v1h-1zM504 526h1v1h-1zM514 526h1v1h-1zM524 526h1v1h-1zM534 526h1v1h-1zM544 526h1v1h-1zM554 526h1v1h-1zM564 526h1v1h-1zM574 526h1v1h-1zM584 526h1v1h-1zM594 526h1v1h-1zM604 526h1v1h-1zM614 526h1v1h-1zM624 526h1v1h-1zM634 526h1v1h-1zM644 526h1v1h-1zM654 526h1v1h-1zM664 526h1v1h-1zM674 526h1v1h-1zM684 526h1v1h-1zM694 526h1v1h-1zM704 526h1v1h-1zM714 526h1v1h-1zM724 526h1v1h-1zM734 526h1v1h-1zM744 526h1v1h-1zM754 526h1v1h-1zM764 526h1v1h-1zM774 526h1v1h-1zM784 526h1v1h-1zM794 526h1v1h-1zM804 526h1v1h-1zM814 526h1v1h-1zM184 576h1v1h-1zM194 576h1v1h-1zM204 576h1v1h-1zM214 576h1v1h-1zM224 576h1v1h-1zM234 576h1v1h-1zM244 576h1v1h-1zM254 576h1v1h-1zM264 576h1v1h-1zM274 576h1v1h-1zM284 576h1v1h-1zM294 576h1v1h-1zM304 576h1v1h-1zM314 576h1v1h-1zM324 576h1v1h-1zM334 576h1v1h-1zM344 576h1v1h-1zM354 576h1v1h-1zM364 576h1v1h-1zM374 576h1v1h-1zM384 576h1v1h-1zM394 576h1v1h-1zM404 576h1v1h-1zM414 576h1v1h-1zM424 576h1v1h-1zM434 576h1v1h-1zM444 576h1v1h-1zM454 576h1v1h-1zM464 576h1v1h-1zM474 576h1v1h-1zM484 576h1v1h-1zM494 576h1v1h-1zM504 576h1v1h-1zM514 576h1v1h-1zM524 576h1v1h-1zM534 576h1v1h-1zM544 576h1v1h-1zM554 576h1v1h-1zM564 576h1v1h-1zM574 576h1v1h-1zM584 576h1v1h-1zM594 576h1v1h-1zM604 576h1v1h-1zM614 576h1v1h-1zM624 576h1v1h-1zM634 576h1v1h-1zM644 576h1v1h-1zM654 576h1v1h-1zM664 576h1v1h-1zM674 576h1v1h-1zM684 576h1v1h-1zM694 576h1v1h-1zM704 576h1v1h-1zM714 576h1v1h-1zM724 576h1v1h-1zM734 576h1v1h-1zM744 576h1v1h-1zM754 576h1v1h-1zM764 576h1v1h-1zM774 576h1v1h-1zM784 576h1v1h-1zM794 576h1v1h-1zM804 576h1v1h-1zM814 576h1v1h-1zM184 626h1v1h-1zM194 626h1v1h-1zM204 626h1v1h-1zM214 626h1v1h-1zM224 626h1v1h-1zM234 626h1v1h-1zM244 626h1v1h-1zM254 626h1v1h-1zM264 626h1v1h-1zM274 626h1v1h-1zM284 626h1v1h-1zM294 626h1v1h-1zM304 626h1v1h-1zM314 626h1v1h-1zM324 626h1v1h-1zM334 626h1v1h-1zM344 626h1v1h-1zM354 626h1v1h-1zM364 626h1v1h-1zM374 626h1v1h-1zM384 626h1v1h-1zM394 626h1v1h-1zM404 626h1v1h-1zM414 626h1v1h-1zM424 626h1v1h-1zM434 626h1v1h-1zM444 626h1v1h-1zM454 626h1v1h-1zM464 626h1v1h-1zM474 626h1v1h-1zM484 626h1v1h-1zM494 626h1v1h-1zM504 626h1v1h-1zM514 626h1v1h-1zM524 626h1v1h-1zM534 626h1v1h-1zM544 626h1v1h-1zM554 626h1v1h-1zM564 626h1v1h-1zM574 626h1v1h-1zM584 626h1v1h-1zM594 626h1v1h-1zM604 626h1v1h-1zM614 626h1v1h-1zM624 626h1v1h-1zM634 626h1v1h-1zM644 626h1v1h-1zM654 626h1v1h-1zM664 626h1v1h-1zM674 626h1v1h-1zM684 626h1v1h-1zM694 626h1v1h-1zM704 626h1v1h-1zM714 626h1v1h-1zM724 626h1v1h-1zM734 626h1v1h-1zM744 626h1v1h-1zM754 626h1v1h-1zM764 626h1v1h-1zM774 626h1v1h-1zM784 626h1v1h-1zM794 626h1v1h-1zM804 626h1v1h-1zM814 626h1v1h-1zM184 676h1v1h-1zM194 676h1v1h-1zM204 676h1v1h-1zM214 676h1v1h-1zM224 676h1v1h-1zM234 676h1v1h-1zM244 676h1v1h-1zM254 676h1v1h-1zM264 676h1v1h-1zM274 676h1v1h-1zM284 676h1v1h-1zM294 676h1v1h-1zM304 676h1v1h-1zM314 676h1v1h-1zM324 676h1v1h-1zM334 676h1v1h-1zM344 676h1v1h-1zM354 676h1v1h-1zM364 676h1v1h-1zM374 676h1v1h-1zM384 676h1v1h-1zM394 676h1v1h-1zM404 676h1v1h-1zM414 676h1v1h-1zM424 676h1v1h-1zM434 676h1v1h-1zM444 676h1v1h-1zM454 676h1v1h-1zM464 676h1v1h-1zM474 676h1v1h-1zM484 676h1v1h-1zM494 676h1v1h-1zM504 676h1v1h-1zM514 676h1v1h-1zM524 676h1v1h-1zM534 676h1v1h-1zM544 676h1v1h-1zM554 676h1v1h-1zM564 676h1v1h-1zM574 676h1v1h-1zM584 676h1v1h-1zM594 676h1v1h-1zM604 676h1v1h-1zM614 676h1v1h-1zM624 676h1v1h-1zM634 676h1v1h-1zM644 676h1v1h-1zM654 676h1v1h-1zM664 676h1v1h-1zM674 676h1v1h-1zM684 676h1v1h-1zM694 676h1v1h-1zM704 676h1v1h-1zM714 676h1v1h-1zM724 676h1v1h-1zM734 676h1v1h-1zM744 676h1v1h-1zM754 676h1v1h-1zM764 676h1v1h-1zM774 676h1v1h-1zM784 676h1v1h-1zM794 676h1v1h-1zM804 676h1v1h-1zM814 676h1v1h-1zM224 86h1v1h-1zM224 96h1v1h-1zM224 106h1v1h-1zM224 116h1v1h-1zM224 136h1v1h-1zM224 146h1v1h-1zM224 156h1v1h-1zM224 166h1v1h-1zM224 186h1v1h-1zM224 196h1v1h-1zM224 206h1v1h-1zM224 216h1v1h-1zM224 236h1v1h-1zM224 246h1v1h-1zM224 256h1v1h-1zM224 266h1v1h-1zM224 286h1v1h-1zM224 296h1v1h-1zM224 306h1v1h-1zM224 316h1v1h-1zM224 336h1v1h-1zM224 346h1v1h-1zM224 356h1v1h-1zM224 366h1v1h-1zM224 386h1v1h-1zM224 396h1v1h-1zM224 406h1v1h-1zM224 416h1v1h-1zM224 436h1v1h-1zM224 446h1v1h-1zM224 456h1v1h-1zM224 466h1v1h-1zM224 486h1v1h-1zM224 496h1v1h-1zM224 506h1v1h-1zM224 516h1v1h-1zM224 536h1v1h-1zM224 546h1v1h-1zM224 556h1v1h-1zM224 566h1v1h-1zM224 586h1v1h-1zM224 596h1v1h-1zM224 606h1v1h-1zM224 616h1v1h-1zM224 636h1v1h-1zM224 646h1v1h-1zM224 656h1v1h-1zM224 666h1v1h-1zM224 686h1v1h-1zM224 696h1v1h-1zM224 706h1v1h-1zM224 716h1v1h-1zM274 86h1v1h-1zM274 96h1v1h-1zM274 106h1v1h-1zM274 116h1v1h-1zM274 136h1v1h-1zM274 146h1v1h-1zM274 156h1v1h-1zM274 166h1v1h-1zM274 186h1v1h-1zM274 196h1v1h-1zM274 206h1v1h-1zM274 216h1v1h-1zM274 236h1v1h-1zM274 246h1v1h-1zM274 256h1v1h-1zM274 266h1v1h-1zM274 286h1v1h-1zM274 296h1v1h-1zM274 306h1v1h-1zM274 316h1v1h-1zM274 336h1v1h-1zM274 346h1v1h-1zM274 356h1v1h-1zM274 366h1v1h-1zM274 386h1v1h-1zM274 396h1v1h-1zM274 406h1v1h-1zM274 416h1v1h-1zM274 436h1v1h-1zM274 446h1v1h-1zM274 456h1v1h-1zM274 466h1v1h-1zM274 486h1v1h-1zM274 496h1v1h-1zM274 506h1v1h-1zM274 516h1v1h-1zM274 536h1v1h-1zM274 546h1v1h-1zM274 556h1v1h-1zM274 566h1v1h-1zM274 586h1v1h-1zM274 596h1v1h-1zM274 606h1v1h-1zM274 616h1v1h-1zM274 636h1v1h-1zM274 646h1v1h-1zM274 656h1v1h-1zM274 666h1v1h-1zM274 686h1v1h-1zM274 696h1v1h-1zM274 706h1v1h-1zM274 716h1v1h-1zM324 86h1v1h-1zM324 96h1v1h-1zM324 106h1v1h-1zM324 116h1v1h-1zM324 136h1v1h-1zM324 146h1v1h-1zM324 156h1v1h-1zM324 166h1v1h-1zM324 186h1v1h-1zM324 196h1v1h-1zM324 206h1v1h-1zM324 216h1v1h-1zM324 236h1v1h-1zM324 246h1v1h-1zM324 256h1v1h-1zM324 266h1v1h-1zM324 286h1v1h-1zM324 296h1v1h-1zM324 306h1v1h-1zM324 316h1v1h-1zM324 336h1v1h-1zM324 346h1v1h-1zM324 356h1v1h-1zM324 366h1v1h-1zM324 386h1v1h-1zM324 396h1v1h-1zM324 406h1v1h-1zM324 416h1v1h-1zM324 436h1v1h-1zM324 446h1v1h-1zM324 456h1v1h-1zM324 466h1v1h-1zM324 486h1v1h-1zM324 496h1v1h-1zM324 506h1v1h-1zM324 516h1v1h-1zM324 536h1v1h-1zM324 546h1v1h-1zM324 556h1v1h-1zM324 566h1v1h-1zM324 586h1v1h-1zM324 596h1v1h-1zM324 606h1v1h-1zM324 616h1v1h-1zM324 636h1v1h-1zM324 646h1v1h-1zM324 656h1v1h-1zM324 666h1v1h-1zM324 686h1v1h-1zM324 696h1v1h-1zM324 706h1v1h-1zM324 716h1v1h-1zM374 86h1v1h-1zM374 96h1v1h-1zM374 106h1v1h-1zM374 116h1v1h-1zM374 136h1v1h-1zM374 146h1v1h-1zM374 156h1v1h-1zM374 166h1v1h-1zM374 186h1v1h-1zM374 196h1v1h-1zM374 206h1v1h-1zM374 216h1v1h-1zM374 236h1v1h-1zM374 246h1v1h-1zM374 256h1v1h-1zM374 266h1v1h-1zM374 286h1v1h-1zM374 296h1v1h-1zM374 306h1v1h-1zM374 316h1v1h-1zM374 336h1v1h-1zM374 346h1v1h-1zM374 356h1v1h-1zM374 366h1v1h-1zM374 386h1v1h-1zM374 396h1v1h-1zM374 406h1v1h-1zM374 416h1v1h-1zM374 436h1v1h-1zM374 446h1v1h-1zM374 456h1v1h-1zM374 466h1v1h-1zM374 486h1v1h-1zM374 496h1v1h-1zM374 506h1v1h-1zM374 516h1v1h-1zM374 536h1v1h-1zM374 546h1v1h-1zM374 556h1v1h-1zM374 566h1v1h-1zM374 586h1v1h-1zM374 596h1v1h-1zM374 606h1v1h-1zM374 616h1v1h-1zM374 636h1v1h-1zM374 646h1v1h-1zM374 656h1v1h-1zM374 666h1v1h-1zM374 686h1v1h-1zM374 696h1v1h-1zM374 706h1v1h-1zM374 716h1v1h-1zM424 86h1v1h-1zM424 96h1v1h-1zM424 106h1v1h-1zM424 116h1v1h-1zM424 136h1v1h-1zM424 146h1v1h-1zM424 156h1v1h-1zM424 166h1v1h-1zM424 186h1v1h-1zM424 196h1v1h-1zM424 206h1v1h-1zM424 216h1v1h-1zM424 236h1v1h-1zM424 246h1v1h-1zM424 256h1v1h-1zM424 266h1v1h-1zM424 286h1v1h-1zM424 296h1v1h-1zM424 306h1v1h-1zM424 316h1v1h-1zM424 336h1v1h-1zM424 346h1v1h-1zM424 356h1v1h-1zM424 366h1v1h-1zM424 386h1v1h-1zM424 396h1v1h-1zM424 406h1v1h-1zM424 416h1v1h-1zM424 436h1v1h-1zM424 446h1v1h-1zM424 456h1v1h-1zM424 466h1v1h-1zM424 486h1v1h-1zM424 496h1v1h-1zM424 506h1v1h-1zM424 516h1v1h-1zM424 536h1v1h-1zM424 546h1v1h-1zM424 556h1v1h-1zM424 566h1v1h-1zM424 586h1v1h-1zM424 596h1v1h-1zM424 606h1v1h-1zM424 616h1v1h-1zM424 636h1v1h-1zM424 646h1v1h-1zM424 656h1v1h-1zM424 666h1v1h-1zM424 686h1v1h-1zM424 696h1v1h-1zM424 706h1v1h-1zM424 716h1v1h-1zM474 86h1v1h-1zM474 96h1v1h-1zM474 106h1v1h-1zM474 116h1v1h-1zM474 136h1v1h-1zM474 146h1v1h-1zM474 156h1v1h-1zM474 166h1v1h-1zM474 186h1v1h-1zM474 196h1v1h-1zM474 206h1v1h-1zM474 216h1v1h-1zM474 236h1v1h-1zM474 246h1v1h-1zM474 256h1v1h-1zM474 266h1v1h-1zM474 286h1v1h-1zM474 296h1v1h-1zM474 306h1v1h-1zM474 316h1v1h-1zM474 336h1v1h-1zM474 346h1v1h-1zM474 356h1v1h-1zM474 366h1v1h-1zM474 386h1v1h-1zM474 396h1v1h-1zM474 406h1v1h-1zM474 416h1v1h-1zM474 436h1v1h-1zM474 446h1v1h-1zM474 456h1v1h-1zM474 466h1v1h-1zM474 486h1v1h-1zM474 496h1v1h-1zM474 506h1v1h-1zM474 516h1v1h-1zM474 536h1v1h-1zM474 546h1v1h-1zM474 556h1v1h-1zM474 566h1v1h-1zM474 586h1v1h-1zM474 596h1v1h-1zM474 606h1v1h-1zM474 616h1v1h-1zM474 636h1v1h-1zM474 646h1v1h-1zM474 656h1v1h-1zM474 666h1v1h-1zM474 686h1v1h-1zM474 696h1v1h-1zM474 706h1v1h-1zM474 716h1v1h-1zM524 86h1v1h-1zM524 96h1v1h-1zM524 106h1v1h-1zM524 116h1v1h-1zM524 136h1v1h-1zM524 146h1v1h-1zM524 156h1v1h-1zM524 166h1v1h-1zM524 186h1v1h-1zM524 196h1v1h-1zM524 206h1v1h-1zM524 216h1v1h-1zM524 236h1v1h-1zM524 246h1v1h-1zM524 256h1v1h-1zM524 266h1v1h-1zM524 286h1v1h-1zM524 296h1v1h-1zM524 306h1v1h-1zM524 316h1v1h-1zM524 336h1v1h-1zM524 346h1v1h-1zM524 356h1v1h-1zM524 366h1v1h-1zM524 386h1v1h-1zM524 396h1v1h-1zM524 406h1v1h-1zM524 416h1v1h-1zM524 436h1v1h-1zM524 446h1v1h-1zM524 456h1v1h-1zM524 466h1v1h-1zM524 486h1v1h-1zM524 496h1v1h-1zM524 506h1v1h-1zM524 516h1v1h-1zM524 536h1v1h-1zM524 546h1v1h-1zM524 556h1v1h-1zM524 566h1v1h-1zM524 586h1v1h-1zM524 596h1v1h-1zM524 606h1v1h-1zM524 616h1v1h-1zM524 636h1v1h-1zM524 646h1v1h-1zM524 656h1v1h-1zM524 666h1v1h-1zM524 686h1v1h-1zM524 696h1v1h-1zM524 706h1v1h-1zM524 716h1v1h-1zM574 86h1v1h-1zM574 96h1v1h-1zM574 106h1v1h-1zM574 116h1v1h-1zM574 136h1v1h-1zM574 146h1v1h-1zM574 156h1v1h-1zM574 166h1v1h-1zM574 186h1v1h-1zM574 196h1v1h-1zM574 206h1v1h-1zM574 216h1v1h-1zM574 236h1v1h-1zM574 246h1v1h-1zM574 256h1v1h-1zM574 266h1v1h-1zM574 286h1v1h-1zM574 296h1v1h-1zM574 306h1v1h-1zM574 316h1v1h-1zM574 336h1v1h-1zM574 346h1v1h-1zM574 356h1v1h-1zM574 366h1v1h-1zM574 386h1v1h-1zM574 396h1v1h-1zM574 406h1v1h-1zM574 416h1v1h-1zM574 436h1v1h-1zM574 446h1v1h-1zM574 456h1v1h-1zM574 466h1v1h-1zM574 486h1v1h-1zM574 496h1v1h-1zM574 506h1v1h-1zM574 516h1v1h-1zM574 536h1v1h-1zM574 546h1v1h-1zM574 556h1v1h-1zM574 566h1v1h-1zM574 586h1v1h-1zM574 596h1v1h-1zM574 606h1v1h-1zM574 616h1v1h-1zM574 636h1v1h-1zM574 646h1v1h-1zM574 656h1v1h-1zM574 666h1v1h-1zM574 686h1v1h-1zM574 696h1v1h-1zM574 706h1v1h-1zM574 716h1v1h-1zM624 86h1v1h-1zM624 96h1v1h-1zM624 106h1v1h-1zM624 116h1v1h-1zM624 136h1v1h-1zM624 146h1v1h-1zM624 156h1v1h-1zM624 166h1v1h-1zM624 186h1v1h-1zM624 196h1v1h-1zM624 206h1v1h-1zM624 216h1v1h-1zM624 236h1v1h-1zM624 246h1v1h-1zM624 256h1v1h-1zM624 266h1v1h-1zM624 286h1v1h-1zM624 296h1v1h-1zM624 306h1v1h-1zM624 316h1v1h-1zM624 336h1v1h-1zM624 346h1v1h-1zM624 356h1v1h-1zM624 366h1v1h-1zM624 386h1v1h-1zM624 396h1v1h-1zM624 406h1v1h-1zM624 416h1v1h-1zM624 436h1v1h-1zM624 446h1v1h-1zM624 456h1v1h-1zM624 466h1v1h-1zM624 486h1v1h-1zM624 496h1v1h-1zM624 506h1v1h-1zM624 516h1v1h-1zM624 536h1v1h-1zM624 546h1v1h-1zM624 556h1v1h-1zM624 566h1v1h-1zM624 586h1v1h-1zM624 596h1v1h-1zM624 606h1v1h-1zM624 616h1v1h-1zM624 636h1v1h-1zM624 646h1v1h-1zM624 656h1v1h-1zM624 666h1v1h-1zM624 686h1v1h-1zM624 696h1v1h-1zM624 706h1v1h-1zM624 716h1v1h-1zM674 86h1v1h-1zM674 96h1v1h-1zM674 106h1v1h-1zM674 116h1v1h-1zM674 136h1v1h-1zM674 146h1v1h-1zM674 156h1v1h-1zM674 166h1v1h-1zM674 186h1v1h-1zM674 196h1v1h-1zM674 206h1v1h-1zM674 216h1v1h-1zM674 236h1v1h-1zM674 246h1v1h-1zM674 256h1v1h-1zM674 266h1v1h-1zM674 286h1v1h-1zM674 296h1v1h-1zM674 306h1v1h-1zM674 316h1v1h-1zM674 336h1v1h-1zM674 346h1v1h-1zM674 356h1v1h-1zM674 366h1v1h-1zM674 386h1v1h-1zM674 396h1v1h-1zM674 406h1v1h-1zM674 416h1v1h-1zM674 436h1v1h-1zM674 446h1v1h-1zM674 456h1v1h-1zM674 466h1v1h-1zM674 486h1v1h-1zM674 496h1v1h-1zM674 506h1v1h-1zM674 516h1v1h-1zM674 536h1v1h-1zM674 546h1v1h-1zM674 556h1v1h-1zM674 566h1v1h-1zM674 586h1v1h-1zM674 596h1v1h-1zM674 606h1v1h-1zM674 616h1v1h-1zM674 636h1v1h-1zM674 646h1v1h-1zM674 656h1v1h-1zM674 666h1v1h-1zM674 686h1v1h-1zM674 696h1v1h-1zM674 706h1v1h-1zM674 716h1v1h-1zM724 86h1v1h-1zM724 96h1v1h-1zM724 106h1v1h-1zM724 116h1v1h-1zM724 136h1v1h-1zM724 146h1v1h-1zM724 156h1v1h-1zM724 166h1v1h-1zM724 186h1v1h-1zM724 196h1v1h-1zM724 206h1v1h-1zM724 216h1v1h-1zM724 236h1v1h-1zM724 246h1v1h-1zM724 256h1v1h-1zM724 266h1v1h-1zM724 286h1v1h-1zM724 296h1v1h-1zM724 306h1v1h-1zM724 316h1v1h-1zM724 336h1v1h-1zM724 346h1v1h-1zM724 356h1v1h-1zM724 366h1v1h-1zM724 386h1v1h-1zM724 396h1v1h-1zM724 406h1v1h-1zM724 416h1v1h-1zM724 436h1v1h-1zM724 446h1v1h-1zM724 456h1v1h-1zM724 466h1v1h-1zM724 486h1v1h-1zM724 496h1v1h-1zM724 506h1v1h-1zM724 516h1v1h-1zM724 536h1v1h-1zM724 546h1v1h-1zM724 556h1v1h-1zM724 566h1v1h-1zM724 586h1v1h-1zM724 596h1v1h-1zM724 606h1v1h-1zM724 616h1v1h-1zM724 636h1v1h-1zM724 646h1v1h-1zM724 656h1v1h-1zM724 666h1v1h-1zM724 686h1v1h-1zM724 696h1v1h-1zM724 706h1v1h-1zM724 716h1v1h-1zM774 86h1v1h-1zM774 96h1v1h-1zM774 106h1v1h-1zM774 116h1v1h-1zM774 136h1v1h-1zM774 146h1v1h-1zM774 156h1v1h-1zM774 166h1v1h-1zM774 186h1v1h-1zM774 196h1v1h-1zM774 206h1v1h-1zM774 216h1v1h-1zM774 236h1v1h-1zM774 246h1v1h-1zM774 256h1v1h-1zM774 266h1v1h-1zM774 286h1v1h-1zM774 296h1v1h-1zM774 306h1v1h-1zM774 316h1v1h-1zM774 336h1v1h-1zM774 346h1v1h-1zM774 356h1v1h-1zM774 366h1v1h-1zM774 386h1v1h-1zM774 396h1v1h-1zM774 406h1v1h-1zM774 416h1v1h-1zM774 436h1v1h-1zM774 446h1v1h-1zM774 456h1v1h-1zM774 466h1v1h-1zM774 486h1v1h-1zM774 496h1v1h-1zM774 506h1v1h-1zM774 516h1v1h-1zM774 536h1v1h-1zM774 546h1v1h-1zM774 556h1v1h-1zM774 566h1v1h-1zM774 586h1v1h-1zM774 596h1v1h-1zM774 606h1v1h-1zM774 616h1v1h-1zM774 636h1v1h-1zM774 646h1v1h-1zM774 656h1v1h-1zM774 666h1v1h-1zM774 686h1v1h-1zM774 696h1v1h-1zM774 706h1v1h-1zM774 716h1v1h-1z' fill='#8a8a8a'/><path d='M273 176h3v1h-3zM274 175h1v3h-1zM273 276h3v1h-3zM274 275h1v3h-1zM273 376h3v1h-3zM274 375h1v3h-1zM273 476h3v1h-3zM274 475h1v3h-1zM273 576h3v1h-3zM274 575h1v3h-1zM273 676h3v1h-3zM274 675h1v3h-1zM373 176h3v1h-3zM374 175h1v3h-1zM373 276h3v1h-3zM374 275h1v3h-1zM373 376h3v1h-3zM374 375h1v3h-1zM373 476h3v1h-3zM374 475h1v3h-1zM373 576h3v1h-3zM374 575h1v3h-1zM373 676h3v1h-3zM374 675h1v3h-1zM473 176h3v1h-3zM474 175h1v3h-1zM473 276h3v1h-3zM474 275h1v3h-1zM473 376h3v1h-3zM474 375h1v3h-1zM473 476h3v1h-3zM474 475h1v3h-1zM473 576h3v1h-3zM474 575h1v3h-1zM473 676h3v1h-3zM474 675h1v3h-1zM573 176h3v1h-3zM574 175h1v3h-1zM573 276h3v1h-3zM574 275h1v3h-1zM573 376h3v1h-3zM574 375h1v3h-1zM573 476h3v1h-3zM574 475h1v3h-1zM573 576h3v1h-3zM574 575h1v3h-1zM573 676h3v1h-3zM574 675h1v3h-1zM673 176h3v1h-3zM674 175h1v3h-1zM673 276h3v1h-3zM674 275h1v3h-1zM673 376h3v1h-3zM674 375h1v3h-1zM673 476h3v1h-3zM674 475h1v3h-1zM673 576h3v1h-3zM674 575h1v3h-1zM673 676h3v1h-3zM674 675h1v3h-1zM773 176h3v1h-3zM774 175h1v3h-1zM773 276h3v1h-3zM774 275h1v3h-1zM773 376h3v1h-3zM774 375h1v3h-1zM773 476h3v1h-3zM774 475h1v3h-1zM773 576h3v1h-3zM774 575h1v3h-1zM773 676h3v1h-3zM774 675h1v3h-1z' fill='#7a7a7a'/></svg><div class='a' style='left:174px;top:76px;width:5px;height:5px;background:#000'></div><div class='a' style='left:821px;top:76px;width:6px;height:5px;background:#000'></div><div class='a' style='left:174px;top:724px;width:5px;height:6px;background:#000'></div><div class='a' style='left:821px;top:724px;width:6px;height:6px;background:#000'></div><div class='a' style='left:184px;top:721px;width:7px;height:7px;border:1px solid #000;background:#fff'></div><svg class='a' style='left:186px;top:723px' width='4' height='4' viewBox='0 0 4 4' ><path d='M0.8 3.4Q1 1.2 3.4 1' stroke='#000' fill='none' stroke-width='1.3'/><rect x='2.2' y='0.2' width='1.6' height='1.6' fill='#000'/></svg><div class='a' style='left:801px;top:720px;width:8px;height:8px;border:1px solid #000;background:#fff'></div><div class='a' style='left:803px;top:722px;width:4px;height:4px;background:#000'></div><svg class='a' style='left:0px;top:0px' width='865' height='764' viewBox='0 0 865 764' ><path d='M844 377.5H839.5L836.5 380.5V423.5L839.5 426.5H844' fill='none' stroke='#bdbdbd'/><path d='M839.5 396.5L842.5 393.5' stroke='#3a5fd0' stroke-width='1.4'/><rect x='843' y='392' width='1' height='1' fill='#4a70e0'/><path d='M839 417.5L844 412.5' stroke='#333' stroke-width='1.2' stroke-dasharray='1.5 1.3'/></svg></body></html>
